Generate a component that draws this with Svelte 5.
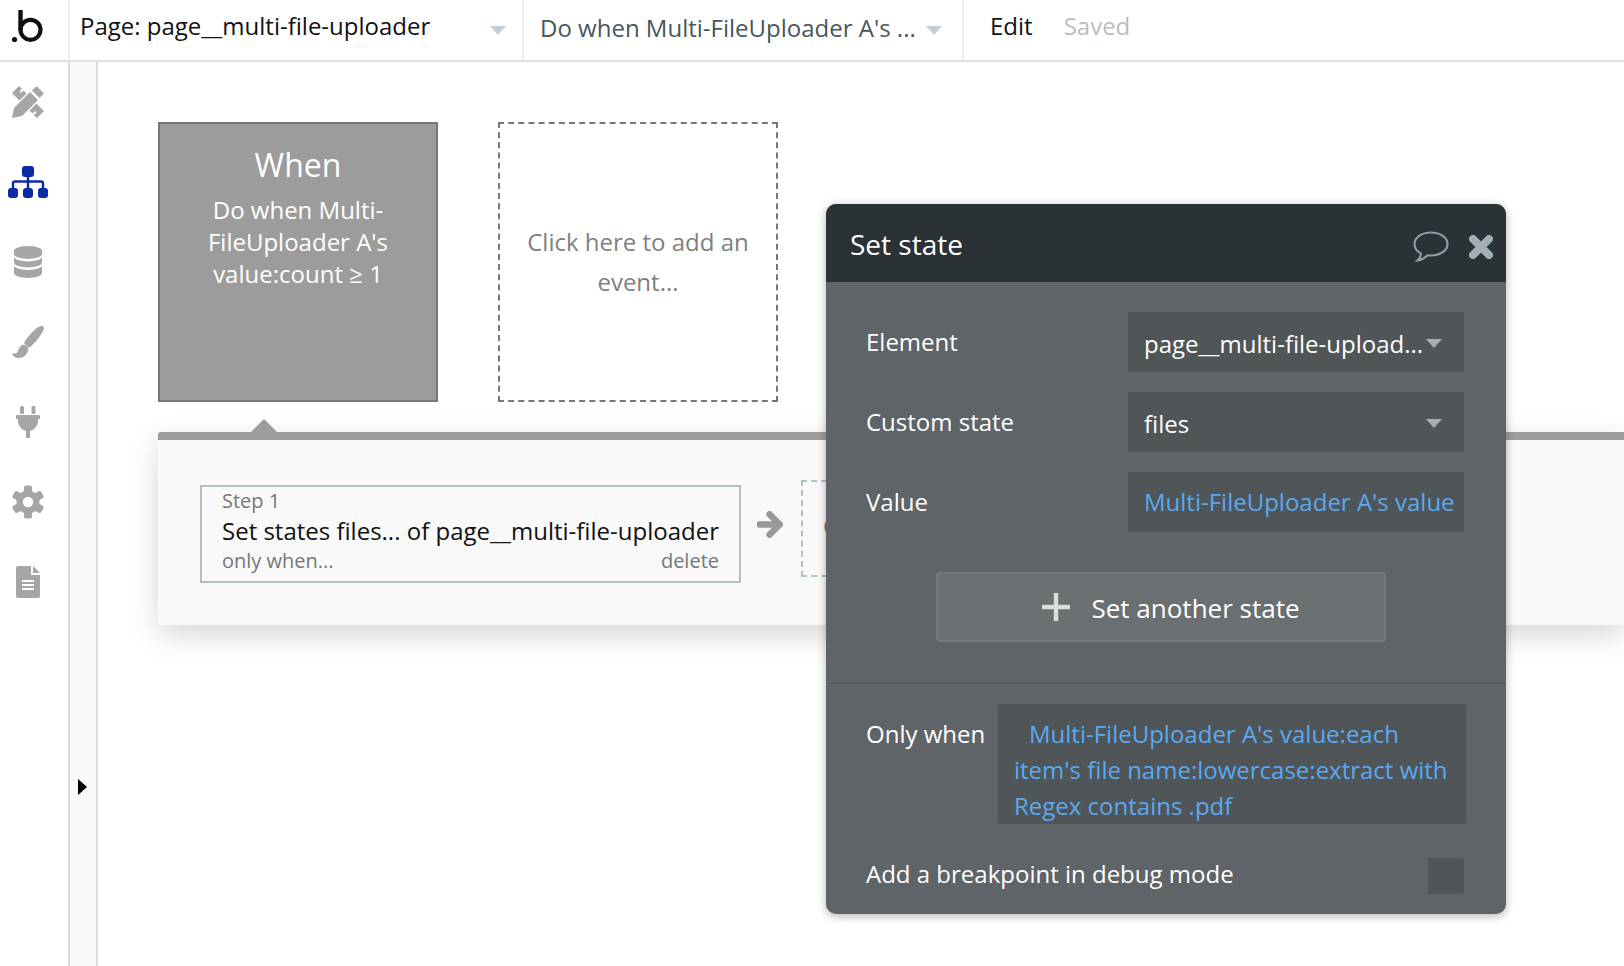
<script>
    const gearTeeth = [0, 60, 120, 180, 240, 300];
    const onlyWhen =
        "Multi-FileUploader A's value:each item's file name:lowercase:extract with Regex contains .pdf";
</script>

<div class="app">
    <header class="topbar">
        <div class="logo">
            <svg width="68" height="60" viewBox="0 0 68 60" aria-label="Bubble logo">
                <circle cx="14.5" cy="39.5" r="2.6" fill="#111" />
                <path d="M20.5 10 V30" stroke="#111" stroke-width="4.4" fill="none" />
                <circle cx="30.5" cy="29.8" r="10" stroke="#111" stroke-width="4.2" fill="none" />
            </svg>
        </div>
        <div class="picker page-picker">
            <span>Page: page__multi-file-uploader</span>
            <i class="caret"></i>
        </div>
        <div class="picker event-picker">
            <span>Do when Multi-FileUploader A's ...</span>
            <i class="caret"></i>
        </div>
        <div class="edit">Edit</div>
        <div class="saved">Saved</div>
    </header>

    <div class="main">
        <nav class="rail">
            <div class="rail-icon">
                <svg width="32" height="32" viewBox="0 0 32 32" fill="#a6a6a6">
                    <path d="M0 7 L7 0 L10 3 L7.5 5.5 L9 7 L11.5 4.5 L14.5 7.5 L7.5 14.5Z" />
                    <path d="M24.5 17.5 L32 25 L25 32 L22 29 L24.5 26.5 L23 25 L20.5 27.5 L17.5 24.5Z" />
                    <path d="M0 32 L2 22 L18 6 L26 14 L10 30Z" />
                    <path d="M20 4.5 L23.5 1 Q24.5 0 25.5 1 L31 6.5 Q32 7.5 31 8.5 L27.5 12Z" />
                </svg>
            </div>
            <div class="rail-icon">
                <svg width="40" height="32" viewBox="0 0 40 32" fill="#0b2aa6">
                    <rect x="14" y="0" width="12" height="11" rx="3" />
                    <rect x="0" y="22" width="10" height="10" rx="3" />
                    <rect x="15" y="22" width="10" height="10" rx="3" />
                    <rect x="30" y="22" width="10" height="10" rx="3" />
                    <path d="M20 10 V23 M5 23 V17.5 A2 2 0 0 1 7 15.5 H33 A2 2 0 0 1 35 17.5 V23" fill="none" stroke="#0b2aa6" stroke-width="2.4" />
                </svg>
            </div>
            <div class="rail-icon">
                <svg width="28" height="32" viewBox="0 0 28 32" fill="#a6a6a6">
                    <path d="M0 5 A14 5 0 0 1 28 5 V8 A14 5 0 0 1 0 8Z" />
                    <path d="M0 10.5 A14 5 0 0 0 28 10.5 V16.5 A14 5 0 0 1 0 16.5Z" />
                    <path d="M0 19 A14 5 0 0 0 28 19 V27 A14 5 0 0 1 0 27Z" />
                </svg>
            </div>
            <div class="rail-icon">
                <svg width="32" height="32" viewBox="0 0 32 32" fill="#a6a6a6">
                    <path d="M12 17 C16 10 24 1 29 0 C32 -0.5 32.5 2 31.5 4 C29 10 22 18 17 22Z" />
                    <path d="M10 19 C13 18 15 19 16 22 C17 27 12 32 7 32 C4 32 1 31 0 27 C3 28 5 28 6 25 C7 22 8 20 10 19Z" />
                </svg>
            </div>
            <div class="rail-icon">
                <svg width="24" height="32" viewBox="0 0 24 32" fill="#a6a6a6">
                    <rect x="4" y="0" width="4" height="8" rx="1.5" />
                    <rect x="15.5" y="0" width="4" height="8" rx="1.5" />
                    <path d="M0 10 Q0 9 1 9 H23 Q24 9 24 10 V13 H22 V15 C22 20 18 24 14 25 V32 H10 V25 C6 24 2 20 2 15 V13 H0Z" />
                </svg>
            </div>
            <div class="rail-icon">
                <svg width="32" height="34" viewBox="0 0 32 34" fill="#a6a6a6">
                    {#each gearTeeth as angle}
                        <rect x="12" y="0.5" width="8" height="8" rx="2" transform="rotate({angle} 16 17)" />
                    {/each}
                    <circle cx="16" cy="17" r="11.5" />
                    <circle cx="16" cy="17" r="5.2" fill="#fff" />
                </svg>
            </div>
            <div class="rail-icon">
                <svg width="24" height="32" viewBox="0 0 24 32" fill="#a6a6a6">
                    <path d="M2 0 H15 V9 H24 V30 A2 2 0 0 1 22 32 H2 A2 2 0 0 1 0 30 V2 A2 2 0 0 1 2 0Z" />
                    <path d="M17 0 L24 7 H17Z" />
                    <path d="M6 15 H18 M6 19 H18 M6 23 H18" stroke="#fff" stroke-width="2" />
                </svg>
            </div>
        </nav>
        <div class="strip"><i class="expand"></i></div>

        <main class="canvas">
            <div class="events">
                <div class="event-card">
                    <div class="event-head">When</div>
                    <div class="event-name">Do when Multi-<br />FileUploader A's<br />value:count ≥ 1</div>
                </div>
                <div class="add-event">Click here to add an<br />event...</div>
            </div>

            <section class="actions">
                <i class="pointer"></i>
                <div class="step">
                    <div class="step-num">Step 1</div>
                    <div class="step-title">Set states files... of page__multi-file-uploader</div>
                    <div class="step-foot"><span>only when...</span><span>delete</span></div>
                </div>
                <svg class="arrow" width="26" height="27" viewBox="0 0 26 27">
                    <path d="M2.5 13.5 H21 M12.5 3.2 L22.8 13.5 L12.5 23.8" fill="none" stroke="#999" stroke-width="6.4" stroke-linecap="round" stroke-linejoin="round" />
                </svg>
                <div class="add-action">Click here to add an action...</div>
            </section>

            <aside class="popup">
                <div class="popup-head">
                    <span class="popup-title">Set state</span>
                    <svg class="bubble" width="36" height="31" viewBox="0 0 36 31">
                        <path d="M18 1.5 C8.5 1.5 1.5 6.5 1.5 13 C1.5 17 4 20.5 8 22.5 C8 25 6.5 27.5 4.5 29.5 C8.5 29 12 27 14.5 24.3 C15.5 24.4 17 24.5 18 24.5 C27.5 24.5 34.5 19.5 34.5 13 C34.5 6.5 27.5 1.5 18 1.5Z" fill="none" stroke="#8f9da1" stroke-width="2.2" />
                    </svg>
                    <svg class="close" width="24" height="24" viewBox="0 0 24 24">
                        <path d="M4 4 L20 20 M20 4 L4 20" stroke="#a2afb3" stroke-width="8" stroke-linecap="round" />
                    </svg>
                </div>
                <div class="popup-body">
                    <div class="rows">
                        <div class="label">Element</div>
                        <div class="field">
                            <span class="value">page__multi-file-upload...</span>
                            <i class="caret small"></i>
                        </div>
                        <div class="label">Custom state</div>
                        <div class="field">
                            <span class="value">files</span>
                            <i class="caret small"></i>
                        </div>
                        <div class="label">Value</div>
                        <div class="field link"><span class="value">Multi-FileUploader A's value</span></div>
                    </div>

                    <div class="another">
                        <svg width="28" height="28" viewBox="0 0 28 28">
                            <path d="M14 0 V28 M0 14 H28" stroke="#dcdcdc" stroke-width="4.4" />
                        </svg>
                        <span>Set another state</span>
                    </div>

                    <div class="divider"></div>

                    <div class="only-row">
                        <div class="only-label">Only when</div>
                        <div class="only-field">{onlyWhen}</div>
                    </div>

                    <div class="debug-row">
                        <span>Add a breakpoint in debug mode</span>
                        <i class="checkbox"></i>
                    </div>
                </div>
            </aside>
        </main>
    </div>
</div>

<style>
    :global(body) {
        margin: 0;
        background: #fff;
    }

    .app {
        width: 1624px;
        height: 966px;
        overflow: hidden;
        display: flex;
        flex-direction: column;
        font-family: "Open Sans", "Noto Sans", sans-serif;
        font-size: 24px;
        color: #111;
    }

    .topbar {
        height: 60px;
        flex: none;
        display: flex;
        align-items: stretch;
        border-bottom: 2px solid #dfe2e4;
        line-height: 60px;
    }

    .logo {
        width: 68px;
        border-right: 2px solid #edf0f2;
    }

    .logo svg {
        display: block;
    }

    .picker {
        display: flex;
        align-items: center;
        justify-content: space-between;
        box-sizing: border-box;
        border-right: 2px solid #edf0f2;
    }

    .page-picker {
        width: 454px;
        padding: 0 16px 0 10px;
    }

    .page-picker span {
        position: relative;
        top: -4px;
    }

    .event-picker {
        width: 440px;
        padding: 0 20px 0 16px;
        color: #47575c;
    }

    .event-picker span {
        position: relative;
        top: -2px;
    }

    .caret {
        width: 0;
        height: 0;
        border-left: 8px solid transparent;
        border-right: 8px solid transparent;
        border-top: 9px solid #c3cfd6;
        flex: none;
    }

    .edit {
        margin-left: 26px;
        position: relative;
        top: -4px;
    }

    .saved {
        margin-left: 31px;
        color: #bcbcbc;
        position: relative;
        top: -4px;
    }

    .main {
        flex: 1;
        display: flex;
        min-height: 0;
    }

    .rail {
        width: 56px;
        padding-right: 12px;
        flex: none;
        border-right: 2px solid #dcdcdc;
    }

    .rail-icon {
        height: 80px;
        display: flex;
        align-items: center;
        justify-content: center;
    }

    .strip {
        width: 18px;
        padding-left: 8px;
        flex: none;
        background: #f9f9f9;
        border-right: 2px solid #dcdcdc;
    }

    .expand {
        display: block;
        width: 0;
        height: 0;
        margin-top: 717px;
        border-top: 8px solid transparent;
        border-bottom: 8px solid transparent;
        border-left: 9px solid #000;
    }

    .canvas {
        flex: 1;
        position: relative;
        padding: 60px 0 0 60px;
        min-width: 0;
    }

    .events {
        display: flex;
        gap: 60px;
    }

    .event-card,
    .add-event {
        width: 280px;
        height: 280px;
        box-sizing: border-box;
        text-align: center;
    }

    .event-card {
        background: #9c9c9c;
        border: 2px solid #777;
        color: #fff;
        padding-top: 21px;
    }

    .event-head {
        font-size: 32px;
        line-height: 40px;
    }

    .event-name {
        font-size: 24px;
        line-height: 32px;
        margin-top: 9px;
    }

    .add-event {
        border: 2px dashed #777;
        color: #808080;
        line-height: 40px;
        display: flex;
        align-items: center;
        justify-content: center;
    }

    .actions {
        position: relative;
        margin-top: 30px;
        height: 193px;
        box-sizing: border-box;
        background: #f9f9f9;
        border-top: 8px solid #9c9c9c;
        border-radius: 3px 0 0 3px;
        box-shadow: 0 10px 30px rgba(0, 0, 0, 0.16);
        padding: 45px 0 0 42px;
        display: flex;
        align-items: flex-start;
    }

    .pointer {
        position: absolute;
        left: 93px;
        top: -21px;
        width: 0;
        height: 0;
        border-left: 13px solid transparent;
        border-right: 13px solid transparent;
        border-bottom: 13px solid #9c9c9c;
    }

    .step {
        width: 541px;
        height: 98px;
        flex: none;
        box-sizing: border-box;
        border: 2px solid #b0c0c4;
        padding: 0 20px;
    }

    .step-num {
        font-size: 20px;
        line-height: 28px;
        color: #777;
    }

    .step-title {
        line-height: 30px;
        padding-top: 1px;
        white-space: nowrap;
    }

    .step-foot {
        display: flex;
        justify-content: space-between;
        font-size: 20px;
        line-height: 28px;
        padding-top: 1px;
        color: #777;
    }

    .arrow {
        flex: none;
        margin: 26px 0 0 16px;
    }

    .add-action {
        flex: none;
        box-sizing: border-box;
        width: 280px;
        height: 97px;
        margin: -5px 0 0 18px;
        padding-left: 20px;
        border: 2px dashed #b0c0c4;
        color: #777;
        line-height: 87px;
        white-space: nowrap;
    }

    .popup {
        position: absolute;
        left: 728px;
        top: 142px;
        width: 680px;
        height: 710px;
        border-radius: 10px;
        overflow: hidden;
        background: #5f6468;
        box-shadow: 0 2px 10px rgba(0, 0, 0, 0.3);
        color: #fff;
    }

    .popup-head {
        height: 78px;
        background: #2b3235;
        display: flex;
        align-items: center;
        padding: 0 13px 0 24px;
        box-sizing: border-box;
    }

    .popup-title {
        font-size: 28px;
        flex: 1;
        position: relative;
        top: 1px;
    }

    .bubble {
        margin: 6px 20px 0 0;
    }

    .close {
        margin-top: 8px;
    }

    .popup-body {
        padding-top: 30px;
    }

    .rows {
        display: grid;
        grid-template-columns: 262px 336px;
        grid-auto-rows: 60px;
        row-gap: 20px;
        padding-left: 40px;
        align-items: center;
    }

    .label {
        position: relative;
        top: -1px;
    }

    .field {
        height: 60px;
        background: #505558;
        border-radius: 2px;
        display: flex;
        align-items: center;
        padding: 0 22px 0 16px;
        box-sizing: border-box;
        gap: 3px;
    }

    .value {
        flex: 1;
        min-width: 0;
        white-space: nowrap;
        position: relative;
        top: 1px;
    }

    .caret.small {
        border-left-width: 8.5px;
        border-right-width: 8.5px;
        border-top: 9px solid #a9adaf;
        position: relative;
        top: 1px;
    }

    .link {
        color: #5aa9f2;
        padding-right: 0;
    }

    .link .value {
        top: -1px;
    }

    .another {
        width: 450px;
        height: 70px;
        box-sizing: border-box;
        margin: 40px 0 0 110px;
        padding-left: 20px;
        background: #6a6f72;
        border: 2px solid #74797c;
        border-radius: 4px;
        display: flex;
        align-items: center;
        justify-content: center;
        gap: 21px;
        font-size: 26px;
    }

    .another span {
        position: relative;
        top: 1px;
    }

    .divider {
        height: 2px;
        margin-top: 40px;
        background: #585d60;
    }

    .only-row {
        display: flex;
        align-items: flex-start;
        margin: 20px 40px 0 40px;
    }

    .only-label {
        width: 132px;
        flex: none;
        line-height: 36px;
        padding-top: 12px;
    }

    .only-field {
        flex: 1;
        height: 120px;
        box-sizing: border-box;
        background: #505558;
        border-radius: 2px;
        padding: 12px 16px 0;
        line-height: 36px;
        color: #5aa9f2;
        text-indent: 15px;
        overflow: hidden;
    }

    .debug-row {
        display: flex;
        justify-content: space-between;
        margin: 34px 42px 0 40px;
        height: 36px;
        line-height: 32px;
    }

    .checkbox {
        width: 36px;
        height: 36px;
        background: #505558;
        border-radius: 2px;
    }
</style>
